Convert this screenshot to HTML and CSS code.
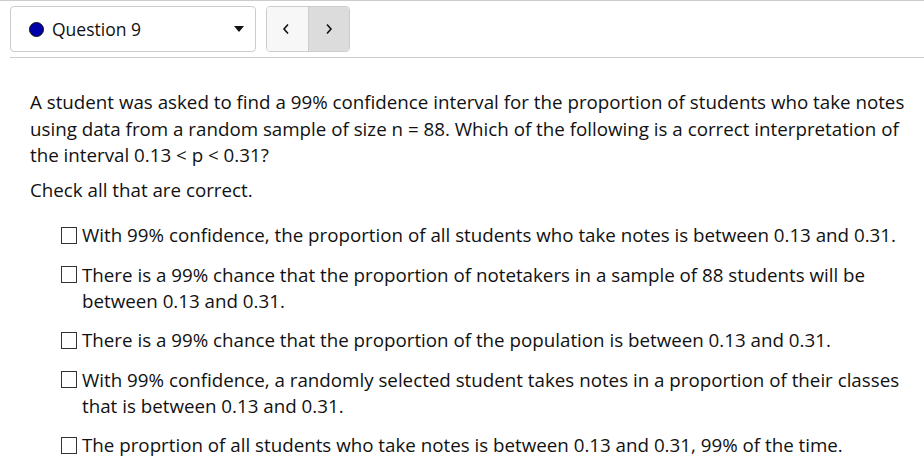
FILE: index.html
```html
<!DOCTYPE html>
<html>
<head>
<meta charset="utf-8">
<link rel="stylesheet" href="styles.css">
</head>
<body>
<div class="page">
  <div class="toolbar">
    <div class="select">
      <span class="dot"></span>
      <span class="qlabel">Question 9</span>
      <span class="caret"></span>
    </div>
    <div class="nav">
      <button class="navbtn prev">
        <svg width="8" height="12" viewBox="0 0 8 12"><path d="M6 1.5 L2 6 L6 10.5" fill="none" stroke="#111" stroke-width="1.6"/></svg>
      </button>
      <button class="navbtn next">
        <svg width="8" height="12" viewBox="0 0 8 12"><path d="M2 1.5 L6 6 L2 10.5" fill="none" stroke="#111" stroke-width="1.6"/></svg>
      </button>
    </div>
  </div>
  <div class="content">
    <p class="question">A student was asked to find a 99% confidence interval for the proportion of students who take notes using data from a random sample of size n = 88. Which of the following is a correct interpretation of the interval 0.13 &lt; p &lt; 0.31?</p>
    <p class="instr">Check all that are correct.</p>
    <ul class="options">
      <li><span class="box"></span><span class="otext">With 99% confidence, the proportion of all students who take notes is between 0.13 and 0.31.</span></li>
      <li><span class="box"></span><span class="otext">There is a 99% chance that the proportion of notetakers in a sample of 88 students will be between 0.13 and 0.31.</span></li>
      <li><span class="box"></span><span class="otext">There is a 99% chance that the proportion of the population is between 0.13 and 0.31.</span></li>
      <li><span class="box"></span><span class="otext">With 99% confidence, a randomly selected student takes notes in a proportion of their classes that is between 0.13 and 0.31.</span></li>
      <li><span class="box"></span><span class="otext">The proprtion of all students who take notes is between 0.13 and 0.31, 99% of the time.</span></li>
    </ul>
  </div>
</div>
</body>
</html>
```
FILE: styles.css
```css
* { box-sizing: border-box; }
html, body { margin: 0; padding: 0; background: #fff; }
body {
  font-family: "Open Sans", "Liberation Sans", sans-serif;
  color: #111;
  border-top: 1px solid #ccc;
}
.page { padding-left: 10px; }
.toolbar {
  display: flex;
  align-items: center;
  gap: 10px;
  padding: 5px 0 5px 0;
  border-bottom: 1px solid #ccc;
}
.select {
  width: 246px;
  height: 46px;
  border: 1px solid #ccc;
  border-radius: 4px;
  display: flex;
  align-items: center;
  padding-left: 18px;
  padding-right: 11px;
}
.dot {
  width: 15px;
  height: 15px;
  border-radius: 50%;
  background: #0000a8;
  border: 1.5px solid #111;
  margin-right: 8px;
  flex: none;
}
.qlabel { font-size: 17.5px; flex: 1; }
.caret {
  width: 0; height: 0;
  border-left: 5px solid transparent;
  border-right: 5px solid transparent;
  border-top: 6px solid #111;
}
.nav {
  display: flex;
  height: 46px;
  border: 1px solid #ccc;
  border-radius: 4px;
  overflow: hidden;
}
.navbtn {
  width: 41px;
  border: 0;
  padding: 0;
  display: flex;
  align-items: center;
  justify-content: center;
  background: #f7f7f7;
}
.navbtn.prev { padding-right: 4px; }
.navbtn.next { background: #dcdcdc; border-left: 1px solid #ccc; }
.content { padding: 31px 10px 0 20px; }
.question {
  margin: 0;
  font-size: 18.75px;
  line-height: 26.5px;
}
.instr {
  margin: 8px 0 0 0;
  font-size: 18.75px;
  line-height: 26.5px;
}
.options {
  list-style: none;
  margin: 19px 0 0 0;
  padding: 0 0 0 31px;
}
.options li {
  display: flex;
  align-items: flex-start;
  font-size: 18.75px;
  line-height: 26px;
  margin-bottom: 13.5px;
}
.box {
  flex: none;
  width: 16px;
  height: 17px;
  border: 1.5px solid #333;
  margin-top: 4.5px;
  margin-right: 5px;
}
.otext { flex: 1; }
```
